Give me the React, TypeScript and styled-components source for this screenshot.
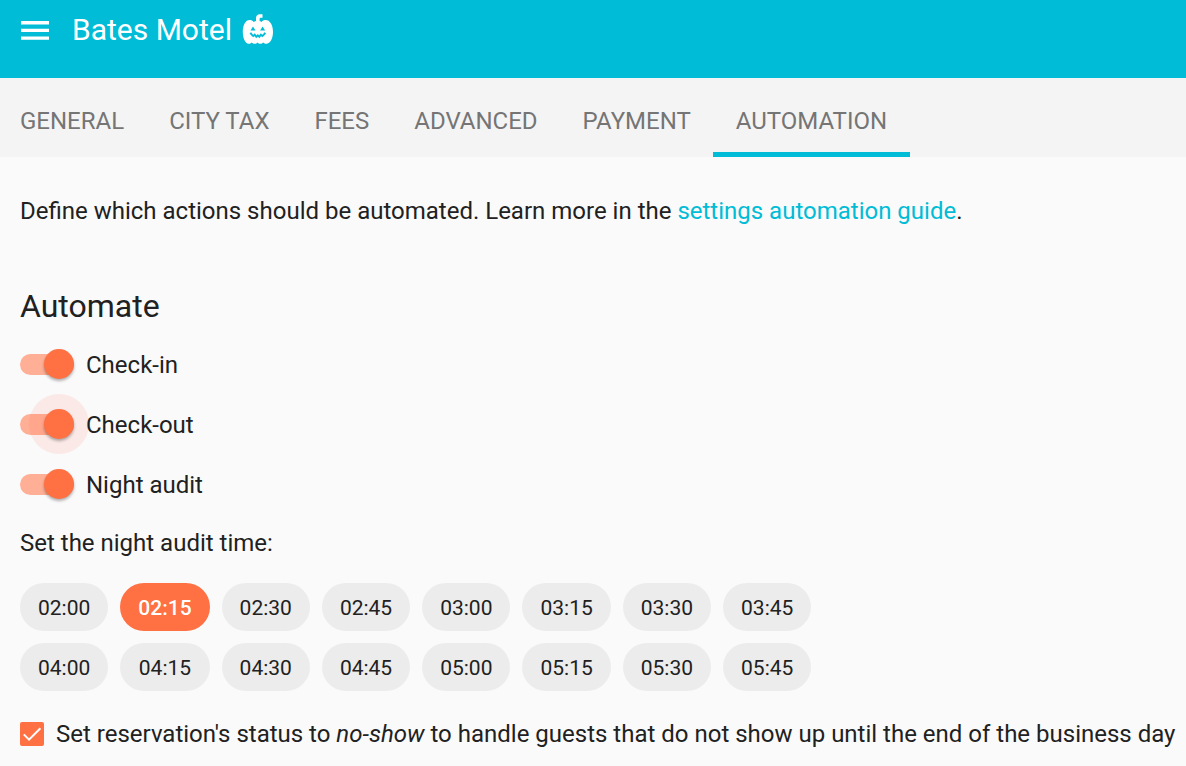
import React, { useState } from 'react';
import styled, { createGlobalStyle } from 'styled-components';

const teal = '#00bcd6';
const orange = '#ff7043';

const GlobalStyle = createGlobalStyle`
  *, *::before, *::after { box-sizing: border-box; }
  body {
    margin: 0;
    background: #fafafa;
    color: #212121;
    font-family: Roboto, "Liberation Sans", sans-serif;
    font-size: 24px;
    line-height: 36px;
  }
`;

const Header = styled.header`
  display: flex;
  align-items: flex-start;
  height: 78px;
  padding: 12px 21px;
  background: ${teal};
  color: #fff;
`;

const MenuButton = styled.button`
  display: flex;
  align-items: center;
  height: 36px;
  margin: 0 23px 0 0;
  padding: 0;
  border: 0;
  background: none;
  color: inherit;
  cursor: pointer;
`;

const Title = styled.h1`
  display: flex;
  align-items: center;
  gap: 10px;
  margin: 0;
  font-size: 30px;
  font-weight: 400;
  line-height: 36px;

  & > svg { margin-bottom: 2px; }
`;

const Tabs = styled.nav`
  display: flex;
  padding: 0 0 0 20px;
  background: #f4f4f4;
  overflow: hidden;
`;

const Tab = styled.a<{ $active?: boolean }>`
  padding: 25px ${p => (p.$active ? 23 : 0)}px 13px;
  margin-right: ${p => (p.$active ? 0 : 45)}px;
  margin-left: ${p => (p.$active ? -23 : 0)}px;
  border-bottom: 5px solid ${p => (p.$active ? teal : 'transparent')};
  color: #757575;
  text-decoration: none;
  text-transform: uppercase;
  white-space: nowrap;
`;

const Content = styled.main`
  padding: 36px 0 0 20px;
`;

const Text = styled.p`
  margin: 0;
`;

const GuideLink = styled.a`
  color: ${teal};
  text-decoration: none;
`;

const Heading = styled.h2`
  margin: 56px 0 0;
  font-size: 32px;
  font-weight: 400;
  line-height: 42px;
`;

const Switches = styled.div`
  display: flex;
  flex-direction: column;
  align-items: flex-start;
  gap: 24px;
  padding: 20px 0 22px;
`;

const SwitchLabel = styled.label`
  display: flex;
  align-items: flex-start;
  gap: 12px;
  cursor: pointer;
`;

const SwitchInput = styled.input<{ $ripple: boolean }>`
  appearance: none;
  display: flex;
  align-items: center;
  width: 54px;
  height: 30px;
  margin: 2px 0 0;
  border-radius: 15px;
  outline: none;
  cursor: pointer;

  &::before {
    content: '';
    width: 54px;
    height: 21px;
    border-radius: 11px;
    background: #bdbdbd;
  }
  &::after {
    content: '';
    flex: none;
    width: 30px;
    height: 30px;
    margin-left: -54px;
    border-radius: 50%;
    background: #fff;
    box-shadow: 0 2px 3px rgba(0, 0, 0, 0.3)
      ${p => (p.$ripple ? ', 0 0 0 15px rgba(255, 87, 64, 0.1)' : '')};
  }
  &:checked::before { background: #ffaf95; }
  &:checked::after {
    margin-left: -30px;
    background: ${orange};
  }
`;

const Times = styled.div`
  display: grid;
  grid-template-columns: repeat(8, max-content);
  gap: 12px;
  padding: 22px 0 25px;
`;

const TimeChip = styled.button<{ $selected: boolean }>`
  padding: 10px 18px 8px;
  border: 0;
  border-radius: 24px;
  background: ${p => (p.$selected ? orange : '#ececec')};
  color: ${p => (p.$selected ? '#fff' : '#212121')};
  font-family: inherit;
  font-size: 21px;
  font-weight: ${p => (p.$selected ? 500 : 400)};
  line-height: 30px;
  cursor: pointer;
`;

const CheckLabel = styled.label`
  display: flex;
  align-items: center;
  gap: 12px;
  padding-bottom: 13px;
  white-space: nowrap;
  cursor: pointer;
`;

const CheckBox = styled.span`
  display: grid;
  flex: none;
  width: 24px;
  height: 24px;

  & > * { grid-area: 1 / 1; }
  & > svg { pointer-events: none; }
`;

const CheckInput = styled.input`
  appearance: none;
  width: 24px;
  height: 24px;
  margin: 0;
  border: 2px solid #757575;
  border-radius: 2px;
  cursor: pointer;
  &:checked { border-color: ${orange}; background: ${orange}; }
`;

const MenuIcon = () => (
  <svg width="28" height="20" viewBox="0 0 28 20" fill="currentColor" aria-hidden="true">
    <path d="M0 1h28v3.4H0zM0 8.7h28v3.4H0zM0 16.4h28v3.4H0z" />
  </svg>
);

const PumpkinIcon = () => (
  <svg width="31" height="31" viewBox="0 0 31 31" aria-hidden="true">
    <path
      fill="#fff"
      d="M14 7V4.200C14 1.600 15.600.2 17.800.2H20.500v3.600h-1.800c-.8 0-1.100.4-1.100 1.100V7c1 .2 1.400.5 2 1 1-1.300 2.400-1.900 4-1.900C27.800 6.100 31 11 31 17.800S28.200 29.800 24.300 29.800c-1.200 0-2.200-.5-3-1.400-.8.9-1.900 1.400-3.100 1.400-1.100 0-2-.5-2.700-1.300-.7.800-1.600 1.300-2.700 1.300-1.200 0-2.300-.5-3.100-1.400-.8.9-1.800 1.400-3 1.400C3.400 29.800.8 24.600.8 17.800S3.700 6.100 7.600 6.100c1.600 0 3 .6 4 1.900.6-.5 1.400-.8 2.400-1z"
    />
    <path fill={teal} d="M11 12.400l2.500 4H8.500zM20.600 12.400l2.500 4h-5z" />
    <path
      fill="none"
      stroke={teal}
      strokeWidth="1.9"
      d="M8.400 18.800c.7 1.300 1.600 2.400 2.800 3.300l1.500-1.500 1.600 2.200 1.500-1.500 1.500 1.500 1.600-2.200 1.500 1.500c1.200-.9 2.100-2 2.800-3.300"
    />
  </svg>
);

const tabs = ['General', 'City tax', 'Fees', 'Advanced', 'Payment', 'Automation'];
const switches = ['Check-in', 'Check-out', 'Night audit'];
const times = ['02', '03', '04', '05'].flatMap(h => ['00', '15', '30', '45'].map(m => `${h}:${m}`));

export default function App() {
  const [time, setTime] = useState('02:15');
  return (
    <>
      <GlobalStyle />
      <Header>
        <MenuButton type="button" aria-label="Menu"><MenuIcon /></MenuButton>
        <Title>Bates Motel <PumpkinIcon /></Title>
      </Header>
      <Tabs>
        {tabs.map(tab => (
          <Tab key={tab} href="#" $active={tab === 'Automation'}>{tab}</Tab>
        ))}
      </Tabs>
      <Content>
        <Text>
          Define which actions should be automated. Learn more in the{' '}
          <GuideLink href="#">settings automation guide</GuideLink>.
        </Text>
        <Heading>Automate</Heading>
        <Switches>
          {switches.map(name => (
            <SwitchLabel key={name}>
              <SwitchInput type="checkbox" role="switch" defaultChecked $ripple={name === 'Check-out'} />
              {name}
            </SwitchLabel>
          ))}
        </Switches>
        <Text>Set the night audit time:</Text>
        <Times>
          {times.map(t => (
            <TimeChip key={t} type="button" $selected={t === time} aria-pressed={t === time} onClick={() => setTime(t)}>
              {t}
            </TimeChip>
          ))}
        </Times>
        <CheckLabel>
          <CheckBox>
            <CheckInput type="checkbox" defaultChecked />
            <svg width="24" height="24" viewBox="0 0 24 24" fill="none" aria-hidden="true">
              <path d="M3.800 12.400l5.200 5.200L20.400 6.200" stroke="#fff" strokeWidth="2" />
            </svg>
          </CheckBox>
          <span>
            Set reservation's status to <em>no-show</em> to handle guests that do not show up until the end of the business day
          </span>
        </CheckLabel>
      </Content>
    </>
  );
}
